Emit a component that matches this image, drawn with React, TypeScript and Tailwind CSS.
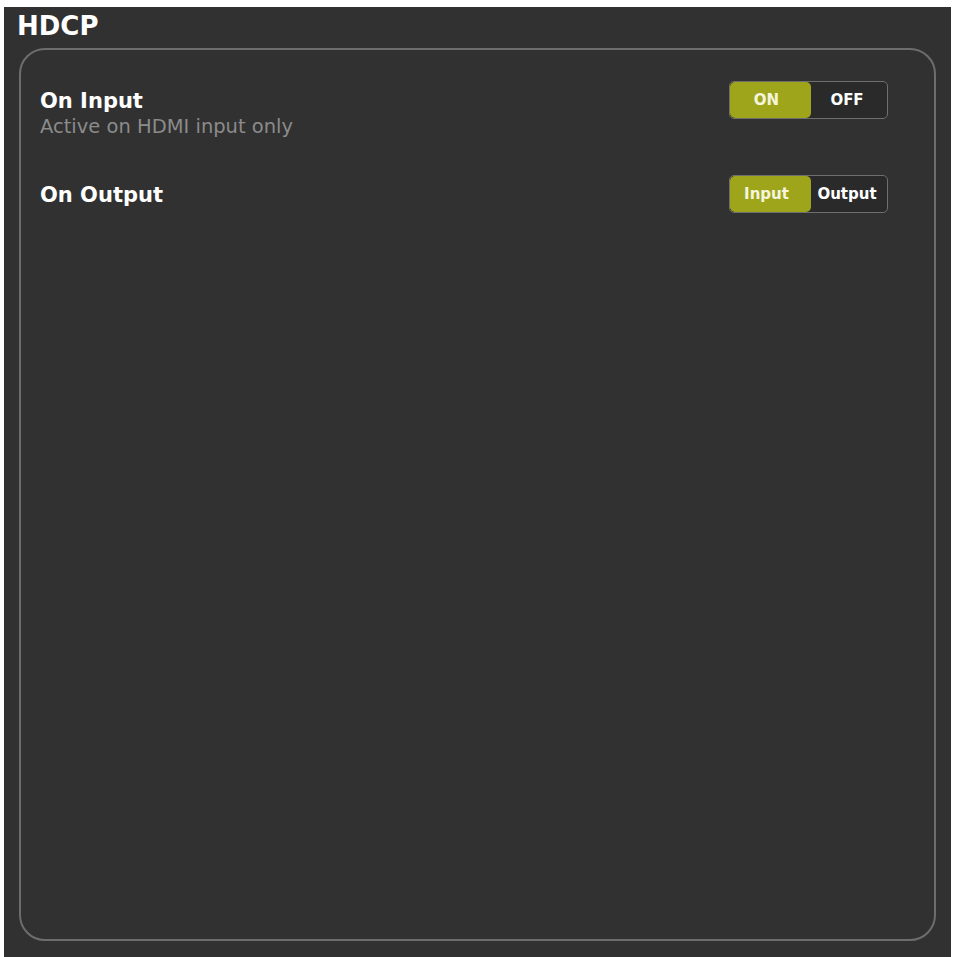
import React from "react";

interface Segment {
  label: string;
}

interface SegmentedToggleProps {
  options: [Segment, Segment];
  active: number;
}

// Two-way switch: the active half is filled olive, the other stays dark.
const SegmentedToggle: React.FC<SegmentedToggleProps> = ({ options, active }) => (
  <div className="flex h-[38px] w-[159px] overflow-hidden rounded-[5px] border border-[#6f6f6f] bg-[#2a2a2a]">
    {options.map((opt, idx) => (
      <button
        key={opt.label}
        className={
          idx === active
            ? "flex h-full w-[81px] items-center justify-center rounded-[5px] bg-[#9ea51b] pr-[8px] text-[15px] font-bold text-[#f4f5dc]"
            : "flex h-full flex-1 items-center justify-center pr-[4px] text-[15px] font-bold text-white"
        }
      >
        {opt.label}
      </button>
    ))}
  </div>
);

interface SettingRowProps {
  title: string;
  hint?: string;
  children: React.ReactNode;
}

const SettingRow: React.FC<SettingRowProps> = ({ title, hint, children }) => (
  <div className="flex items-start justify-between">
    <div className="flex flex-col">
      <div className="flex h-[38px] items-center pt-[4px] text-[21px] font-bold text-white">
        {title}
      </div>
      {hint && (
        <div className="-mt-[3px] text-[19.5px] leading-[22px] text-[#8b8b8b]">{hint}</div>
      )}
    </div>
    {children}
  </div>
);

export default function App() {
  return (
    <div
      className="h-[957px] w-[956px] bg-white pl-[4px] pt-[7px]"
      style={{ fontFamily: '"DejaVu Sans", "Liberation Sans", sans-serif' }}
    >
      <div className="flex h-[950px] w-[947px] flex-col bg-[#313131]">
        <h1 className="pl-[13px] pt-[4px] text-[26px] font-bold leading-[30px] text-white">HDCP</h1>
        <div className="ml-[15px] mt-[7px] flex h-[893px] w-[917px] flex-col gap-[37px] rounded-[26px] border-2 border-[#6d6d6d] pl-[19px] pr-[46px] pt-[31px]">
          <SettingRow title="On Input" hint="Active on HDMI input only">
            <SegmentedToggle options={[{ label: "ON" }, { label: "OFF" }]} active={0} />
          </SettingRow>
          <SettingRow title="On Output">
            <SegmentedToggle options={[{ label: "Input" }, { label: "Output" }]} active={0} />
          </SettingRow>
        </div>
      </div>
    </div>
  );
}
